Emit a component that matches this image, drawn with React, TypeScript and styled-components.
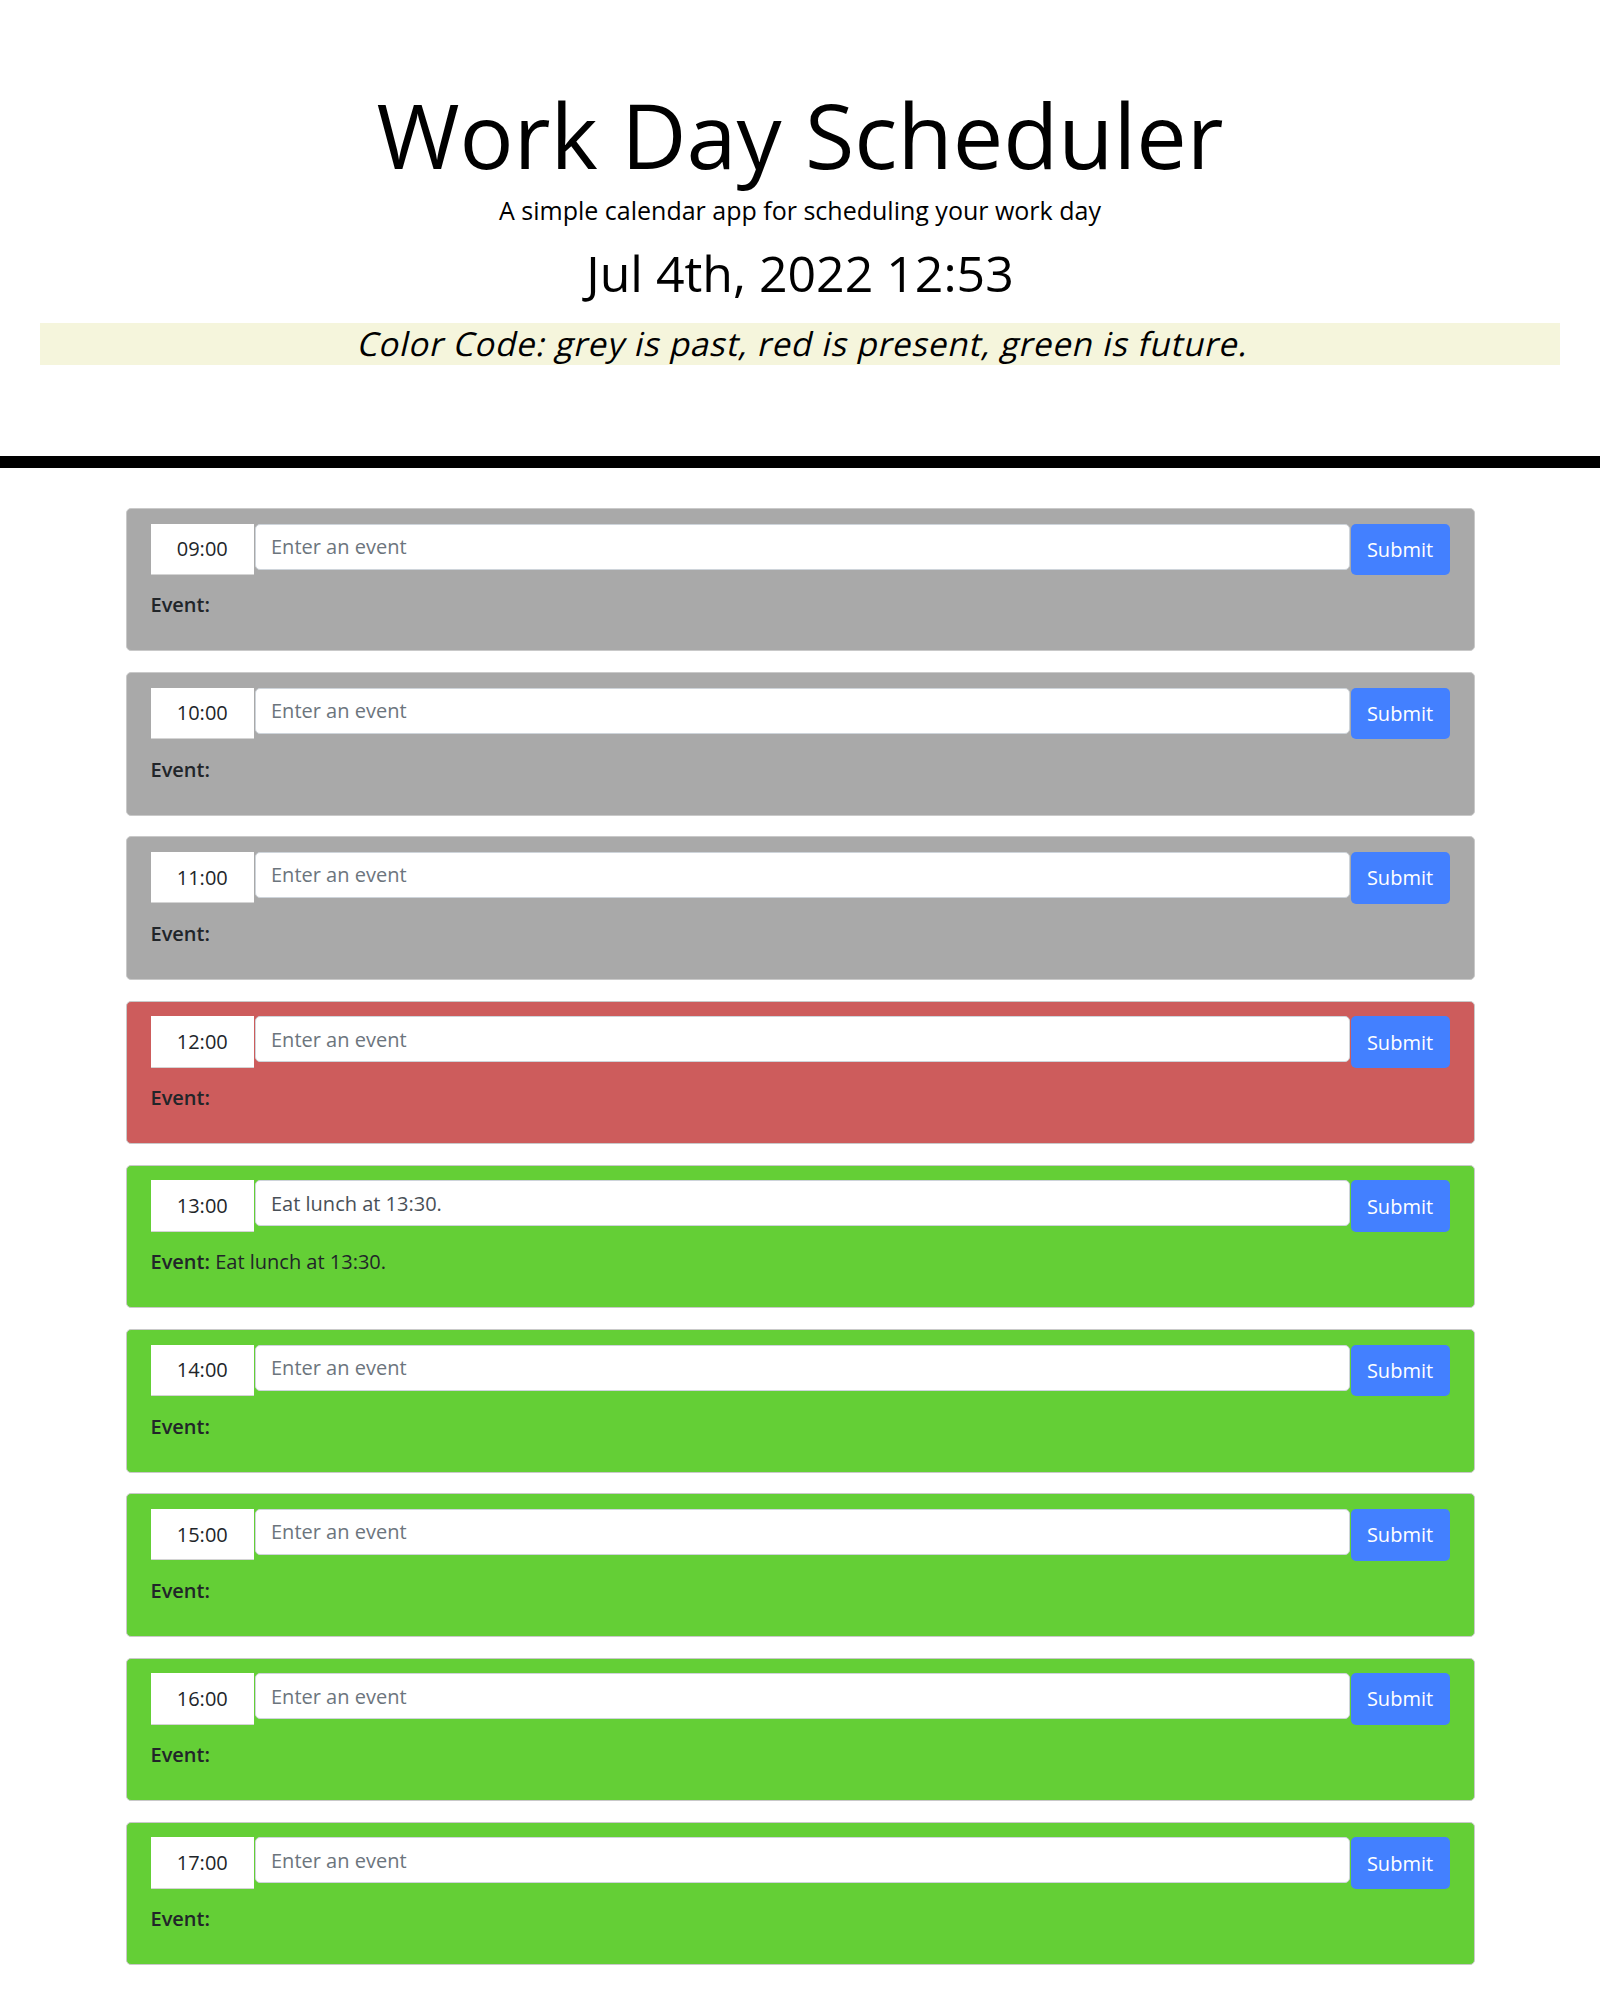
import React, { useState } from "react";
import styled, { createGlobalStyle } from "styled-components";

const GlobalStyle = createGlobalStyle`
  html, body { margin: 0; padding: 0; background: #ffffff; }
  body { font-family: "Open Sans", "Noto Sans", sans-serif; color: #000000; }
  *, *::before, *::after { box-sizing: border-box; }
`;

const Header = styled.header`
  padding: 80px 0 91px;
  border-bottom: 12px solid #000000;
  text-align: center;
`;

const Title = styled.h1`
  margin: 0;
  font-size: 90px;
  line-height: 108px;
  font-weight: 400;
`;

const Lead = styled.p`
  margin: 3.5px 0 0;
  font-size: 25px;
  line-height: 37.5px;
`;

const CurrentDay = styled.p`
  margin: 13.5px 0 0;
  font-size: 50px;
  line-height: 60px;
`;

const Legend = styled.p`
  margin: 20.5px 40px 0;
  padding-left: 8px;
  height: 42px;
  background: #f5f5dc;
  font-size: 33px;
  line-height: 42px;
  letter-spacing: 0.85px;
`;

const Slanted = styled.span`
  display: inline-block;
  font-style: normal;
  transform: skewX(-13deg);
`;

const Schedule = styled.main`
  width: 1349px;
  margin: 0 auto;
  padding-top: 40px;
`;

type Status = "past" | "present" | "future";

const statusColors: Record<Status, string> = {
  past: "#a9a9a9",
  present: "#cd5c5c",
  future: "#64cf36",
};

const HourRow = styled.form<{ $status: Status }>`
  display: flex;
  flex-direction: column;
  margin: 0 0 20.75px;
  padding: 14.5px 24px 30px;
  border: 1.25px solid #c9c9c9;
  border-radius: 5px;
  background: ${(p) => statusColors[p.$status]};
`;

const InputGroup = styled.div`
  display: flex;
  align-items: flex-start;
`;

const TimeBox = styled.div`
  flex: 0 0 103.5px;
  height: 51.5px;
  display: flex;
  align-items: center;
  justify-content: center;
  background: #ffffff;
  border-bottom: 1px solid #d4d4d4;
  font-size: 20px;
  color: #212529;
`;

const EventInput = styled.input`
  flex: 1;
  min-width: 0;
  height: 46px;
  margin-left: 1px;
  padding: 0 15px;
  border: 1.25px solid #ced4da;
  border-radius: 5px;
  background: #ffffff;
  font-family: "Open Sans", "Noto Sans", sans-serif;
  font-size: 20px;
  color: #495057;
  outline: none;
  &::placeholder {
    color: #6c757d;
  }
`;

const SubmitButton = styled.button`
  flex: 0 0 99px;
  height: 51.7px;
  margin-left: 1px;
  border: none;
  border-radius: 5px;
  background: #4380ff;
  color: #ffffff;
  font-family: "Open Sans", "Noto Sans", sans-serif;
  font-size: 20px;
  cursor: pointer;
`;

const EventLine = styled.p`
  margin: 15.3px 0 0;
  font-size: 20px;
  line-height: 30px;
  color: #212529;
`;

const EventLabel = styled.b`
  font-weight: 600;
`;

const hours = [9, 10, 11, 12, 13, 14, 15, 16, 17];
const currentHour = 12;

const pad = (h: number) => `${h < 10 ? "0" : ""}${h}:00`;

const statusFor = (h: number): Status =>
  h < currentHour ? "past" : h === currentHour ? "present" : "future";

const Hour: React.FC<{ hour: number; initial: string }> = ({ hour, initial }) => {
  const [draft, setDraft] = useState(initial);
  const [saved, setSaved] = useState(initial);
  return (
    <HourRow
      $status={statusFor(hour)}
      onSubmit={(e) => {
        e.preventDefault();
        setSaved(draft);
      }}
    >
      <InputGroup>
        <TimeBox>{pad(hour)}</TimeBox>
        <EventInput
          placeholder="Enter an event"
          value={draft}
          onChange={(e) => setDraft(e.target.value)}
        />
        <SubmitButton type="submit">Submit</SubmitButton>
      </InputGroup>
      <EventLine>
        <EventLabel>Event:</EventLabel>
        {saved ? ` ${saved}` : ""}
      </EventLine>
    </HourRow>
  );
};

const initialEvents: Record<number, string> = { 13: "Eat lunch at 13:30." };

export default function App() {
  return (
    <>
      <GlobalStyle />
      <Header>
        <Title>Work Day Scheduler</Title>
        <Lead>A simple calendar app for scheduling your work day</Lead>
        <CurrentDay>Jul 4th, 2022 12:53</CurrentDay>
        <Legend>
          <Slanted>Color Code: grey is past, red is present, green is future.</Slanted>
        </Legend>
      </Header>
      <Schedule>
        {hours.map((h) => (
          <Hour key={h} hour={h} initial={initialEvents[h] ?? ""} />
        ))}
      </Schedule>
    </>
  );
}
